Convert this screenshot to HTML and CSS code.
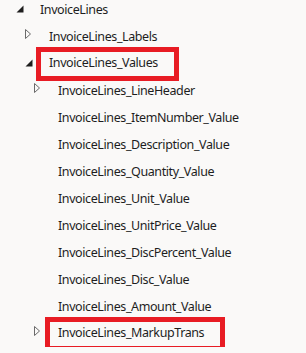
FILE: index.html
```html
<!DOCTYPE html>
<html lang="en">
<head>
  <meta charset="UTF-8" />
  <title>InvoiceLines</title>
  <link rel="stylesheet" href="styles.css">
</head>
<body>

<ul class="tree">
  <li>
    <div class="row">
      <span class="toggle"><svg class="open" width="8" height="8" viewBox="0 0 8 8"><path d="M7.5 0.5V7.5H0.5Z" /></svg></span>
      <span class="name">InvoiceLines</span>
    </div>
    <ul>
      <li>
        <div class="row">
          <span class="toggle"><svg class="closed" width="7" height="10" viewBox="0 0 7 10"><path d="M0.5 0.5L5.5 5L0.5 9.5Z" /></svg></span>
          <span class="name">InvoiceLines_Labels</span>
        </div>
      </li>
      <li>
        <div class="row">
          <span class="toggle"><svg class="open" width="8" height="8" viewBox="0 0 8 8"><path d="M7.5 0.5V7.5H0.5Z" /></svg></span>
          <span class="name marked">InvoiceLines_Values</span>
        </div>
        <ul>
          <li>
            <div class="row">
              <span class="toggle"><svg class="closed" width="7" height="10" viewBox="0 0 7 10"><path d="M0.5 0.5L5.5 5L0.5 9.5Z" /></svg></span>
              <span class="name">InvoiceLines_LineHeader</span>
            </div>
          </li>
          <li><div class="row"><span class="toggle"></span><span class="name">InvoiceLines_ItemNumber_Value</span></div></li>
          <li><div class="row"><span class="toggle"></span><span class="name">InvoiceLines_Description_Value</span></div></li>
          <li><div class="row"><span class="toggle"></span><span class="name">InvoiceLines_Quantity_Value</span></div></li>
          <li><div class="row"><span class="toggle"></span><span class="name">InvoiceLines_Unit_Value</span></div></li>
          <li><div class="row"><span class="toggle"></span><span class="name">InvoiceLines_UnitPrice_Value</span></div></li>
          <li><div class="row"><span class="toggle"></span><span class="name">InvoiceLines_DiscPercent_Value</span></div></li>
          <li><div class="row"><span class="toggle"></span><span class="name">InvoiceLines_Disc_Value</span></div></li>
          <li><div class="row"><span class="toggle"></span><span class="name">InvoiceLines_Amount_Value</span></div></li>
          <li>
            <div class="row">
              <span class="toggle"><svg class="closed" width="7" height="10" viewBox="0 0 7 10"><path d="M0.5 0.5L5.5 5L0.5 9.5Z" /></svg></span>
              <span class="name marked">InvoiceLines_MarkupTrans</span>
            </div>
          </li>
        </ul>
      </li>
    </ul>
  </li>
</ul>

</body>
</html>
```

FILE: styles.css
```css
body {
  margin: 0;
  background: #faf9f8;
  font-family: "Segoe UI", "Noto Sans", sans-serif;
  font-size: 12.5px;
  letter-spacing: -0.4px;
  color: #1e1e1e;
  overflow: hidden;
}

.tree {
  list-style: none;
  margin: -4px 0 0;
  padding: 0 0 0 16px;
}

.tree ul {
  list-style: none;
  margin: 0;
  padding-left: 9px;
}

.row {
  display: flex;
  align-items: center;
  height: 27px;
  white-space: nowrap;
}

.toggle {
  flex: none;
  width: 24px;
  height: 27px;
  display: flex;
  align-items: flex-start;
}

.toggle .open {
  margin-top: 9px;
}

.toggle .open path {
  fill: #1e1e1e;
}

.toggle .closed {
  margin-top: 6px;
}

.toggle .closed path {
  fill: none;
  stroke: #6a6a6a;
  stroke-width: 1;
}

/* red annotation boxes */
.marked {
  padding: 2.5px 16px 4.5px 8.5px;
  margin-left: -8.5px;
  outline: 5px solid #e81c24;
}
```
